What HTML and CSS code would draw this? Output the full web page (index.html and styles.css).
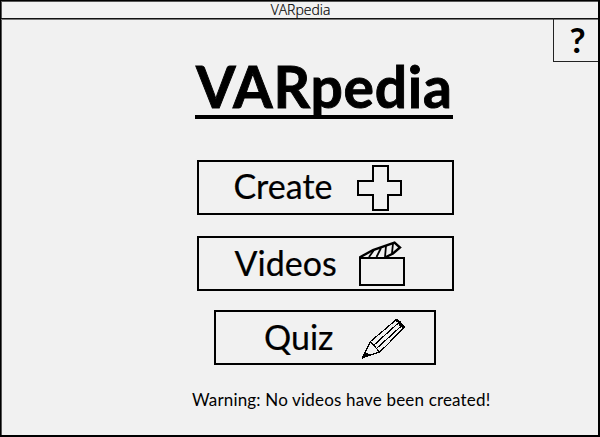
FILE: index.html
```
<!DOCTYPE html>
<html lang="en">
<head>
<meta charset="utf-8">
<title>VARpedia</title>
<link rel="stylesheet" href="styles.css">
</head>
<body>
<div class="window">
  <header class="titlebar"><span>VARpedia</span></header>
  <button class="help">?</button>
  <main class="menu">
    <h1 class="title">VARpedia</h1>
    <button class="item create"><span class="label">Create</span>
      <svg class="icon" width="50" height="51" viewBox="354 162 50 51"><path d="M373 166H388V181H401V195H388V210H373V195H358V181H373Z" fill="none" stroke="#000" stroke-width="2"/></svg>
    </button>
    <button class="item videos"><span class="label">Videos</span>
      <svg class="icon" width="54" height="51" viewBox="354 238 54 51" fill="none" stroke="#000" stroke-width="2"><path d="M360 258H404V285H360Z"/><path d="M359.500 257.500L373 250L394.500 242.500L400 247.500L393 253.500L386 257" stroke-width="2.400"/><path d="M374 250L369 257M381 248L376.500 257M386 246L385 257M393 243.500L392 253" stroke-width="1.800"/></svg>
    </button>
    <button class="item quiz"><span class="label">Quiz</span>
      <svg class="icon" width="54" height="51" viewBox="354 312 54 51" fill="none" stroke="#000" stroke-width="1.200" shape-rendering="crispEdges"><path d="M362.500 357.500L370.500 341.500L397 319L404.500 327L386 346L379.500 352L362.500 357.500M370.500 341.500L379.500 352M374 345L400 321.500M377 348L402.500 325M397 319V321.500H400V325H402.500V327H404.500"/><path d="M362.500 358L365 353L370 355Z" fill="#000"/></svg>
    </button>
    <p class="warning">Warning: No videos have been created!</p>
  </main>
</div>
</body>
</html>
```
FILE: styles.css
```
* { box-sizing: border-box; }
body { margin: 0; background: #f1f1f1; color: #000; font-family: Lato, sans-serif; }
.window { position: relative; width: 600px; height: 437px; border: 2px solid #000; border-top-width: 1px; border-left-width: 1px; box-shadow: inset 1px 1px #555; overflow: hidden; }
.titlebar { height: 18px; border-bottom: 1px solid #111; box-shadow: 0 1px #777; text-align: center; font: 300 14px/18px "Open Sans", sans-serif; }
.titlebar span { position: relative; left: 1px; -webkit-text-stroke: 0.2px #000; }
.help { position: absolute; top: 17px; right: 0; width: 45px; height: 44px; padding: 0 0 2px 3px; border: 1px solid #222; border-top: 0; border-right: 0; background: none; color: #000; font: 700 35px/40px Lato, sans-serif; }
.menu { display: flex; flex-direction: column; align-items: center; padding: 38px 0 0 51px; }
.title { width: 258px; height: 62px; margin: 0 0 41px -2px; padding-left: 1px; border-bottom: 4px solid #000; font-size: 57px; letter-spacing: 0.75px; line-height: 59px; white-space: nowrap; -webkit-text-stroke: 0.9px #000; }
.item { display: flex; width: 257px; height: 55px; padding: 0; border: 2px solid #000; background: none; color: #000; font: 400 34px/47px Lato, sans-serif; text-align: left; }
.label { white-space: nowrap; flex: none; -webkit-text-stroke: 0.2px #000; }
.icon { flex: none; display: block; }
.create { margin-bottom: 21px; padding-left: 35px; }
.create .label { width: 120px; }
.videos { margin-bottom: 19px; padding-left: 36px; line-height: 49px; }
.videos .label { width: 119px; }
.quiz { width: 222px; padding-left: 48px; line-height: 49px; }
.quiz .label { width: 90px; }
.warning { width: 302px; margin: 24px 0 0 36px; font-size: 17px; letter-spacing: 0.17px; line-height: 22px; white-space: nowrap; }
```
